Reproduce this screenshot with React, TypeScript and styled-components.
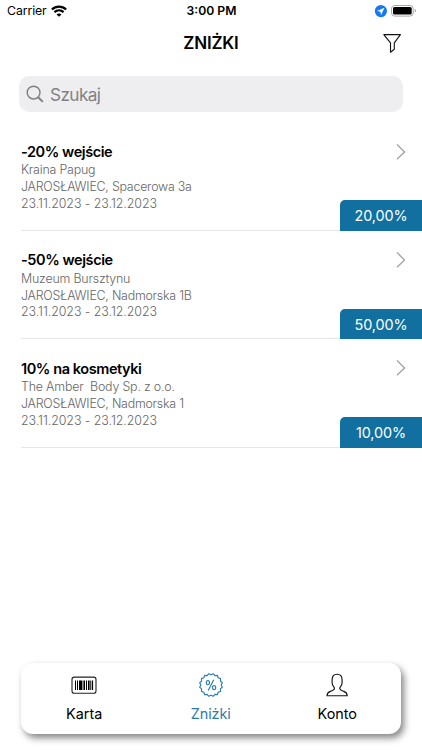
import React from "react";
import styled, { createGlobalStyle } from "styled-components";

const GlobalStyle = createGlobalStyle`
  * { box-sizing: border-box; }
  body { margin: 0; background: #fff; font-family: Inter, "Liberation Sans", sans-serif; color: #000; }
`;

const Screen = styled.div`
  width: 422px;
  height: 750px;
  display: flex;
  flex-direction: column;
  overflow: hidden;
  background: #fff;
`;

const StatusBar = styled.div`
  height: 22px;
  flex: none;
  display: grid;
  grid-template-columns: 1fr auto 1fr;
  align-items: center;
  padding: 0 5px 0 7px;
`;

const Carrier = styled.div`
  display: flex;
  align-items: center;
  gap: 4px;
  font-size: 12.3px;
  letter-spacing: -0.1px;
  line-height: 20px;
  padding-bottom: 1px;
`;

const Clock = styled.div`
  font-size: 12.2px;
  font-weight: 600;
  line-height: 20px;
  padding-bottom: 1px;
  margin-left: -1px;
`;

const StatusIcons = styled.div`
  display: flex;
  justify-content: flex-end;
  align-items: center;
  gap: 4px;
`;

const NavBar = styled.header`
  height: 42px;
  flex: none;
  display: grid;
  grid-template-columns: 1fr auto 1fr;
  align-items: center;
  padding: 0 20px;
`;

const NavTitle = styled.h1`
  grid-column: 2;
  margin: 0;
  font-size: 17px;
  font-weight: 600;
  line-height: 22px;
  letter-spacing: -0.2px;
`;

const FilterButton = styled.button`
  justify-self: end;
  display: flex;
  padding: 0;
  border: 0;
  background: none;
`;

const SearchField = styled.div`
  margin: 12px 19px 10.6px;
  height: 36px;
  flex: none;
  display: flex;
  align-items: center;
  gap: 5px;
  padding-left: 7px;
  border-radius: 10px;
  background: #eeeef0;
  color: #818185;
  font-size: 17.2px;
  letter-spacing: -0.6px;
`;

const List = styled.main`
  flex: 1;
`;

const Row = styled.article`
  height: 108.33px;
  display: flex;
  justify-content: space-between;
  background: linear-gradient(#e6e6e7, #e6e6e7) 21px 100% / 401px 1px no-repeat;
`;

const Details = styled.div`
  padding: 19.4px 0 0 21px;
`;

const Title = styled.h2`
  margin: 0 0 0.5px;
  font-size: 14.5px;
  font-weight: 600;
  line-height: 20px;
  letter-spacing: -0.42px;
`;

const Line = styled.div<{ $spacing: number }>`
  white-space: pre;
  color: #666;
  font-size: 12.4px;
  font-weight: 300;
  line-height: 16.7px;
  letter-spacing: ${(p) => p.$spacing}px;
`;

const Side = styled.div`
  width: 82px;
  display: flex;
  flex-direction: column;
  justify-content: space-between;
  align-items: flex-end;
  padding-top: 20.2px;
`;

const Arrow = styled.svg`
  margin-right: 15px;
`;

const Badge = styled.div`
  width: 82px;
  height: 30.5px;
  border-radius: 5px 0 0 0;
  background: #11709f;
  color: #fff;
  font-size: 14.4px;
  letter-spacing: -0.12px;
  line-height: 31px;
  text-align: center;
`;

const TabBar = styled.nav`
  flex: none;
  height: 71.5px;
  margin: 0 21.5px 16px 21px;
  display: grid;
  grid-template-columns: repeat(3, 1fr);
  border-radius: 12px;
  background: #fff;
  box-shadow: 3px 4px 7px rgba(0, 0, 0, 0.48);
`;

const Tab = styled.div<{ $active?: boolean }>`
  display: flex;
  flex-direction: column;
  align-items: center;
  gap: 7px;
  padding-top: 9.5px;
  color: ${(p) => (p.$active ? "#2a7dab" : "#000")};
  font-size: 14.4px;
  line-height: 20px;
  letter-spacing: ${(p) => (p.$active ? -0.1 : 0)}px;
`;

const discounts = [
  { title: "-20% wejście", place: "Kraina Papug", address: "JAROSŁAWIEC, Spacerowa 3a", value: "20,00%" },
  { title: "-50% wejście", place: "Muzeum Bursztynu", address: "JAROSŁAWIEC, Nadmorska 1B", value: "50,00%" },
  { title: "10% na kosmetyki", place: "The Amber  Body Sp. z o.o.", address: "JAROSŁAWIEC, Nadmorska 1", value: "10,00%" },
];

const sealPath = (() => {
  const teeth = 16;
  const at = (angle: number, r: number) =>
    `${(13 + r * Math.sin(angle)).toFixed(2)} ${(13 - r * Math.cos(angle)).toFixed(2)}`;
  const points: string[] = [];
  for (let i = 0; i < teeth * 2; i++) {
    points.push(at((i * Math.PI) / teeth, i % 2 ? 11.5 : 10.2));
  }
  return `M${points.join("L")}Z`;
})();

const WifiIcon = () => (
  <svg width="16" height="12" viewBox="0 0 15 11" fill="none" stroke="#000" strokeWidth="2.1">
    <path d="M.8 4.1C4.6.4 10.4.4 14.2 4.1" />
    <path d="M3.2 6.6c2.5-2.4 6.1-2.4 8.6 0" />
    <path d="M7.5 11 5.2 8.7c1.3-1.2 3.3-1.2 4.6 0z" fill="#000" stroke="none" />
  </svg>
);

const LocationIcon = () => (
  <svg width="13" height="13" viewBox="0 0 13 13">
    <circle cx="6.9" cy="6.1" r="6.1" fill="#1579f6" />
    <path d="M10.4 2.8 3 6.1l3.5.6.5 3.5z" fill="#fff" />
  </svg>
);

const BatteryIcon = () => (
  <svg width="26" height="12" viewBox="0 0 26 12">
    <rect x=".5" y=".5" width="21.7" height="10.6" rx="3.2" fill="#fff" stroke="#a7a7a7" />
    <rect x="2" y="2" width="18.7" height="7.6" rx="1.6" />
    <path d="M23.7 3.8v4c1.6-.7 1.6-3.3 0-4z" fill="#a0a0a0" />
  </svg>
);

const FunnelIcon = () => (
  <svg width="20" height="21" viewBox="0 0 20 21" fill="none" stroke="#111" strokeWidth="1.1" strokeLinejoin="round">
    <path d="M1.8 1.6h16.6l-6.1 8.2v6.5l-3.8 2.9V9.8z" />
  </svg>
);

const SearchIcon = () => (
  <svg width="19" height="19" viewBox="0 0 19 19" fill="none" stroke="#818185" strokeWidth="1.45">
    <circle cx="7.6" cy="7.6" r="6.4" />
    <path d="m12.2 12.2 4.6 4.7" strokeWidth="2" />
  </svg>
);

const bars = [
  [6, 1], [8, 1], [10, 3.4], [14.4, 1.6], [17, 1], [19, 1.6], [21.3, 1], [23, 1.1],
];

const BarcodeIcon = () => (
  <svg width="26" height="25" viewBox="0 0 26 25">
    <rect x="1" y="5.1" width="24" height="16.2" rx="2.3" fill="none" stroke="#222" strokeWidth="1.1" />
    {bars.map(([x, w]) => <rect key={x} x={x - 2} y="8.5" width={w} height="9.5" />)}
  </svg>
);

const SealIcon = () => (
  <svg width="26" height="25" viewBox="0 0 26 25" fill="none" stroke="#2a7dab" strokeWidth="1.15" strokeLinejoin="round">
    <path d={sealPath} />
    <ellipse cx="9.9" cy="10.6" rx="1.6" ry="2.1" />
    <ellipse cx="16.1" cy="15.6" rx="1.6" ry="2.1" />
    <path d="m15.8 7.7-5.6 10.8" />
  </svg>
);

const PersonIcon = () => (
  <svg width="26" height="25" viewBox="0 0 26 25" fill="none" stroke="#151515" strokeWidth="1.15" strokeLinejoin="round">
    <path d="M3 23.7c.1-2.8 1-3.5 3.4-4.3 2.8-1 4.1-1.5 4.1-3.1 0-1.4-2.4-2.5-2.4-5.5V8c0-4 1.8-5.8 5-5.8s5 1.8 5 5.8v2.8c0 3-2.4 4.1-2.4 5.5 0 1.6 1.3 2.1 4.1 3.1 2.4.8 3.3 1.5 3.4 4.3z" />
  </svg>
);

export default function App() {
  return (
    <>
      <GlobalStyle />
      <Screen>
        <StatusBar>
          <Carrier>Carrier <WifiIcon /></Carrier>
          <Clock>3:00 PM</Clock>
          <StatusIcons><LocationIcon /><BatteryIcon /></StatusIcons>
        </StatusBar>
        <NavBar>
          <NavTitle>ZNIŻKI</NavTitle>
          <FilterButton aria-label="Filtruj"><FunnelIcon /></FilterButton>
        </NavBar>
        <SearchField><SearchIcon />Szukaj</SearchField>
        <List>
          {discounts.map((item) => (
            <Row key={item.title}>
              <Details>
                <Title>{item.title}</Title>
                <Line $spacing={-0.18}>{item.place}</Line>
                <Line $spacing={-0.22}>{item.address}</Line>
                <Line $spacing={-0.05}>23.11.2023 - 23.12.2023</Line>
              </Details>
              <Side>
                <Arrow width="12" height="18" viewBox="0 0 12 18" fill="none" stroke="#a5a5a5" strokeWidth="1.4">
                  <path d="m2 1.5 7.5 7.4L2 16.3" />
                </Arrow>
                <Badge>{item.value}</Badge>
              </Side>
            </Row>
          ))}
        </List>
        <TabBar>
          <Tab><BarcodeIcon />Karta</Tab>
          <Tab $active><SealIcon />Zniżki</Tab>
          <Tab><PersonIcon />Konto</Tab>
        </TabBar>
      </Screen>
    </>
  );
}
